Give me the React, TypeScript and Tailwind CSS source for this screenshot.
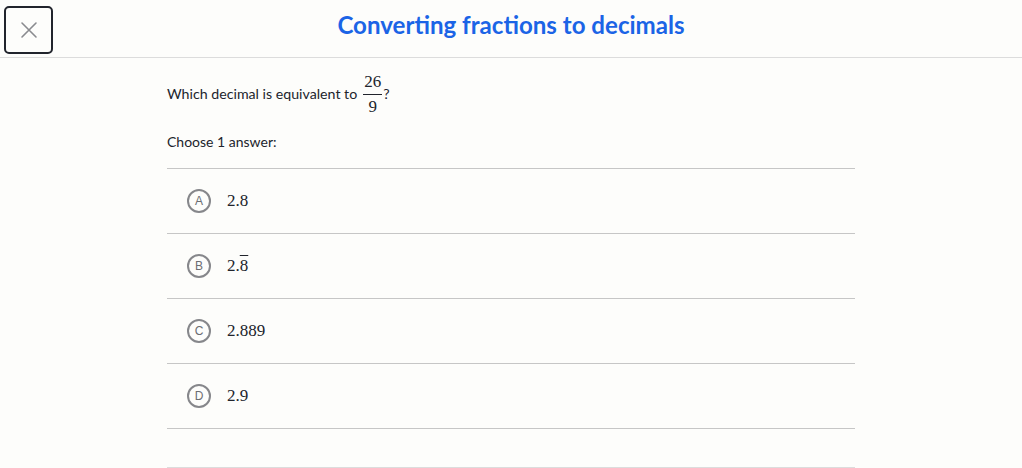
import React from 'react';

const choices = [
  { letter: 'A', value: '2.8' },
  { letter: 'B', value: '2.', bar: '8' },
  { letter: 'C', value: '2.889' },
  { letter: 'D', value: '2.9' },
];

export default function App() {
  return (
    <div className="min-h-[468px] bg-[#fdfdfb] text-[#21242c] font-['Lato','Liberation_Sans',sans-serif]">
      {/* Header */}
      <header className="grid grid-cols-[1fr_auto_1fr] items-center h-[58px] border-b border-[#dcdcdc]">
        <div className="pl-[4px] pt-[2px]">
          <button className="w-[49px] h-[48px] rounded-[5px] border-2 border-[#21242c] flex items-center justify-center">
            <svg width="18" height="18" viewBox="0 0 18 18" fill="none" stroke="#8a8b8f" strokeWidth="1.6" strokeLinecap="round">
              <path d="M2 2 L16 16 M16 2 L2 16" />
            </svg>
          </button>
        </div>
        <h1 className="text-[24.1px] font-bold text-[#1b64e6] leading-none pb-[6px]">
          Converting fractions to decimals
        </h1>
        <div />
      </header>

      {/* Question */}
      <main className="w-[688px] mx-auto pt-[14px]">
        <div className="flex items-center text-[14.2px] h-[44px]">
          <span>Which decimal is equivalent to</span>
          <span className="inline-flex flex-col items-center ml-[6px] mr-[5px] font-['Liberation_Serif',serif] text-[17px] leading-[18px]">
            <span className="px-[1px] pb-[3px]">26</span>
            <span className="w-full h-px bg-[#21242c]" />
            <span className="pt-[3px]">9</span>
          </span>
          <span className="-ml-[4px]">?</span>
        </div>

        <p className="text-[14px] mt-[17px] leading-[18px]">Choose 1 answer:</p>

        <div className="mt-[17px]">
          {choices.map((c) => (
            <div key={c.letter} className="flex items-center gap-4 h-[65px] pl-5 border-t border-[#c6c6c6]">
              <span className="w-6 h-6 rounded-full border-2 border-[#86878b] flex items-center justify-center text-[12px] text-[#6b6d72] font-['Liberation_Sans',sans-serif]">
                {c.letter}
              </span>
              <span className="font-['Liberation_Serif',serif] text-[17px] text-[#21242c]">
                {c.value}
                {c.bar && <span className="overline">{c.bar}</span>}
              </span>
            </div>
          ))}
          <div className="border-t border-[#c6c6c6] h-[39px]" />
          <div className="border-t border-[#dcdcdc]" />
        </div>
      </main>
    </div>
  );
}
